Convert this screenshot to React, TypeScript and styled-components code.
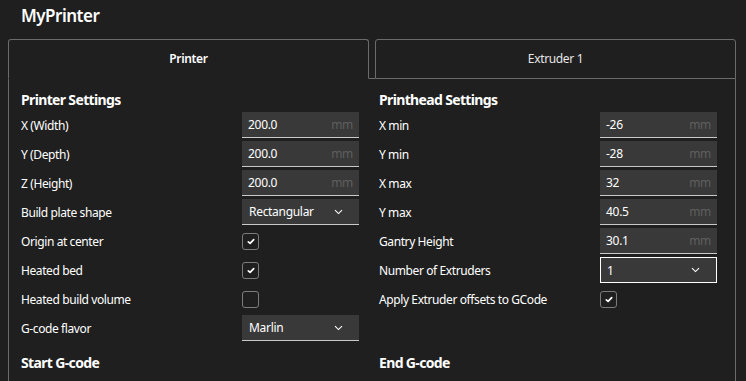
import React from "react";
import styled, { createGlobalStyle } from "styled-components";

const Global = createGlobalStyle`
  html, body { margin: 0; padding: 0; background: #1f1f1f; }
  body { font-family: "Noto Sans", "Open Sans", sans-serif; color: #ffffff; }
  * { box-sizing: border-box; }
`;

const Page = styled.div`
  width: 746px;
  height: 381px;
  overflow: hidden;
  background: #1f1f1f;
`;

const Title = styled.div`
  height: 39px;
  padding-left: 21px;
  font-size: 17px;
  font-weight: 600;
  letter-spacing: -0.5px;
  line-height: 31px;
  color: #ffffff;
`;

const Frame = styled.div`
  margin-left: 8px;
  width: 728px;
`;

const TabBar = styled.div`
  display: flex;
  height: 40px;
`;

const Tab = styled.div<{ $active?: boolean }>`
  width: 361px;
  height: 40px;
  border: 1px solid #6b6b6b;
  border-bottom: ${(p) => (p.$active ? "1px solid transparent" : "1px solid #6b6b6b")};
  border-radius: 3px 3px 0 0;
  display: flex;
  align-items: center;
  justify-content: center;
  font-size: 12px;
  letter-spacing: -0.35px;
  font-weight: ${(p) => (p.$active ? 600 : 400)};
  color: ${(p) => (p.$active ? "#ffffff" : "#e6e6e6")};
  padding-bottom: 2px;
`;

const TabGap = styled.div`
  width: 6px;
  border-bottom: 1px solid #6b6b6b;
`;

const Body = styled.div`
  border-left: 1px solid #6b6b6b;
  border-right: 1px solid #6b6b6b;
  padding: 11px 18px 0 12px;
  display: grid;
  grid-template-columns: 338px 338px;
  column-gap: 20px;
  height: 302px;
`;

const Column = styled.div`
  display: flex;
  flex-direction: column;
`;

const Heading = styled.div`
  font-size: 14px;
  font-weight: 700;
  letter-spacing: -0.65px;
  line-height: 20px;
  height: 20px;
  margin-bottom: 2px;
  color: #ffffff;
`;

const Rows = styled.div`
  height: 241px;
  display: flex;
  flex-direction: column;
`;

const Row = styled.div`
  display: flex;
  align-items: center;
  height: 26px;
  margin-bottom: 3px;
`;

const Label = styled.div`
  width: 221px;
  font-size: 12px;
  letter-spacing: -0.4px;
  color: #ffffff;
  white-space: nowrap;
`;

const Field = styled.div`
  width: 117px;
  height: 26px;
  background: #393939;
  border-bottom: 1px solid #c9c9c9;
  display: flex;
  align-items: center;
  justify-content: space-between;
  padding: 0 6px 0 6px;
  font-size: 12px;
  letter-spacing: -0.3px;
  color: #ffffff;
`;

const Unit = styled.span`
  color: #5f5f5f;
  font-size: 12px;
`;

const Select = styled.div<{ $focused?: boolean }>`
  width: 117px;
  height: 26px;
  background: #393939;
  border: ${(p) => (p.$focused ? "1px solid #ffffff" : "none")};
  border-bottom: 1px solid ${(p) => (p.$focused ? "#ffffff" : "#c9c9c9")};
  display: flex;
  align-items: center;
  justify-content: space-between;
  padding: 0 16px 0 ${(p) => (p.$focused ? "6px" : "7px")};
  font-size: 12px;
  letter-spacing: -0.3px;
  color: #ffffff;
`;

const Box = styled.div`
  width: 17px;
  height: 17px;
  border: 1px solid #7c7c7c;
  border-radius: 3px;
  display: flex;
  align-items: center;
  justify-content: center;
`;

const Chevron = () => (
  <svg width="9" height="6" viewBox="0 0 9 6">
    <polyline points="1,1.2 4.5,4.6 8,1.2" fill="none" stroke="#ffffff" strokeWidth="1.1" />
  </svg>
);

const Check = () => (
  <svg width="8" height="7" viewBox="0 0 8 7">
    <path d="M1.3 3.9 L3.1 5.4 L6.7 1.6" fill="none" stroke="#ffffff" strokeWidth="1.7" strokeLinecap="round" strokeLinejoin="round" />
  </svg>
);

type Item =
  | { kind: "num"; label: string; value: string }
  | { kind: "select"; label: string; value: string; focused?: boolean }
  | { kind: "check"; label: string; checked: boolean };

const left: Item[] = [
  { kind: "num", label: "X (Width)", value: "200.0" },
  { kind: "num", label: "Y (Depth)", value: "200.0" },
  { kind: "num", label: "Z (Height)", value: "200.0" },
  { kind: "select", label: "Build plate shape", value: "Rectangular" },
  { kind: "check", label: "Origin at center", checked: true },
  { kind: "check", label: "Heated bed", checked: true },
  { kind: "check", label: "Heated build volume", checked: false },
  { kind: "select", label: "G-code flavor", value: "Marlin" },
];

const right: Item[] = [
  { kind: "num", label: "X min", value: "-26" },
  { kind: "num", label: "Y min", value: "-28" },
  { kind: "num", label: "X max", value: "32" },
  { kind: "num", label: "Y max", value: "40.5" },
  { kind: "num", label: "Gantry Height", value: "30.1" },
  { kind: "select", label: "Number of Extruders", value: "1", focused: true },
  { kind: "check", label: "Apply Extruder offsets to GCode", checked: true },
];

const Setting = ({ item }: { item: Item }) => (
  <Row>
    <Label>{item.label}</Label>
    {item.kind === "num" && (
      <Field>
        <span>{item.value}</span>
        <Unit>mm</Unit>
      </Field>
    )}
    {item.kind === "select" && (
      <Select $focused={item.focused}>
        <span>{item.value}</span>
        <Chevron />
      </Select>
    )}
    {item.kind === "check" && <Box>{item.checked && <Check />}</Box>}
  </Row>
);

export default function App() {
  return (
    <Page>
      <Global />
      <Title>MyPrinter</Title>
      <Frame>
        <TabBar>
          <Tab $active>Printer</Tab>
          <TabGap />
          <Tab>Extruder 1</Tab>
        </TabBar>
        <Body>
          <Column>
            <Heading>Printer Settings</Heading>
            <Rows>
              {left.map((it) => (
                <Setting key={it.label} item={it} />
              ))}
            </Rows>
            <Heading>Start G-code</Heading>
          </Column>
          <Column>
            <Heading>Printhead Settings</Heading>
            <Rows>
              {right.map((it) => (
                <Setting key={it.label} item={it} />
              ))}
            </Rows>
            <Heading>End G-code</Heading>
          </Column>
        </Body>
      </Frame>
    </Page>
  );
}
